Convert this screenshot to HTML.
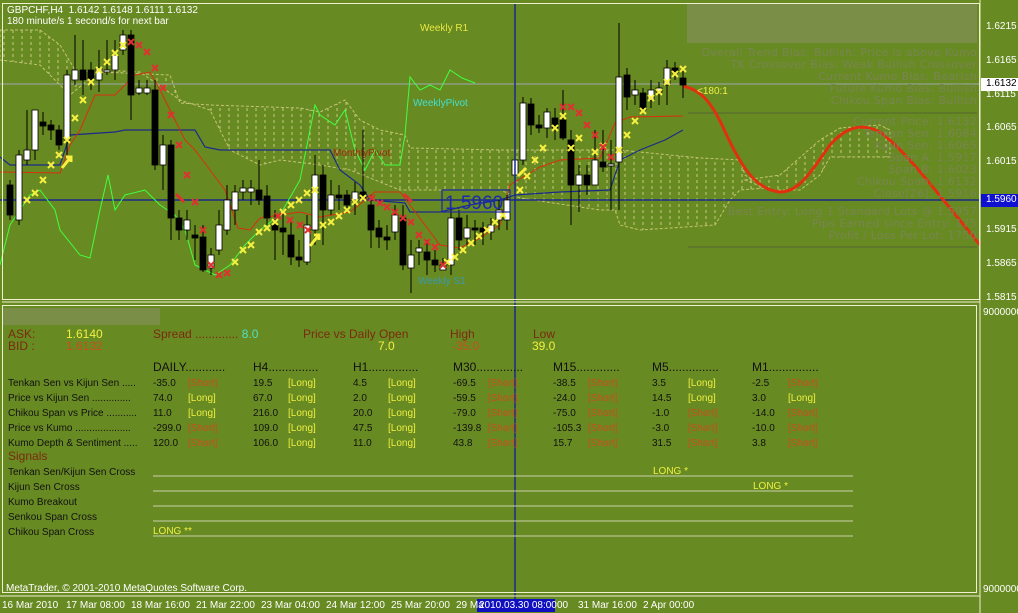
<!DOCTYPE html>
<html><head><meta charset="utf-8">
<style>
html,body{margin:0;padding:0;background:#688a22;}
body{width:1018px;height:613px;overflow:hidden;position:relative;font-family:"Liberation Sans",sans-serif;}
svg{position:absolute;left:0;top:0;}
.t{position:absolute;white-space:pre;font-size:11px;line-height:13px;}
.b{color:#7a2a10;font-size:12px;}
.y{color:#f0f040;}
.r{color:#c8501c;}
.k{color:#111;font-size:10px;}
.h{color:#111;font-size:12px;}
.info{position:absolute;right:41px;font-family:"DejaVu Sans",sans-serif;font-size:11px;color:#788552;white-space:pre;line-height:12px;letter-spacing:0.3px;}
.ax{position:absolute;left:986px;font-size:10px;color:#fff;}
.tm{position:absolute;top:600px;font-size:10px;color:#fff;}
</style></head><body>
<svg width="1018" height="613" viewBox="0 0 1018 613" xmlns="http://www.w3.org/2000/svg">
<defs>
<pattern id="vd" width="9" height="6" patternUnits="userSpaceOnUse">
<line x1="4" y1="0" x2="4" y2="3" stroke="#e6e0a0" stroke-width="1"/>
</pattern>
</defs>
<rect x="687" y="3" width="290" height="40" fill="#7a8e48"/>
<rect x="3" y="308" width="157" height="17" fill="#7a8e48"/>
<polygon fill="url(#vd)" stroke="#e0d890" stroke-dasharray="3,2" stroke-width="1" opacity="0.75" points="0,30 40,30 60,45 75,70 100,72 170,75 180,103 210,105 300,108 320,112 345,100 360,120 380,130 405,135 410,148 500,150 560,150 620,150 700,158 740,160 745,175 765,188 740,190 730,200 715,225 640,230 620,225 615,210 600,210 520,198 500,190 400,190 350,170 320,165 280,160 260,165 230,150 210,110 180,100 140,72 100,70 70,95 40,65 0,60"/>
<polygon fill="url(#vd)" stroke="#e0d890" stroke-dasharray="3,2" stroke-width="1" opacity="0.75" points="745,180 780,175 820,140 840,128 880,125 890,130 890,157 830,157 820,175 800,190 770,190"/>
<line x1="0" y1="84" x2="980" y2="84" stroke="#a0a8b0" stroke-width="1"/>
<line x1="0" y1="200" x2="980" y2="200" stroke="#1a2a8a" stroke-width="1.5"/>
<line x1="688" y1="113" x2="977" y2="113" stroke="#556633" stroke-width="1"/>
<line x1="688" y1="247" x2="977" y2="247" stroke="#556633" stroke-width="1"/>
<polyline fill="none" stroke="#40ff40" stroke-width="1" points="0,265 10,225 30,195 40,190 55,210 60,230 80,255 90,258 100,210 108,175 115,210 125,195 145,190 160,205 175,215 185,230 195,265 215,275 230,265 245,245 260,230 280,215 300,180 315,105 320,115 335,125 345,110 355,150 365,170 375,150 385,165 400,165 405,135 410,77 420,90 430,85 440,90 450,70 462,78 475,83"/>
<polyline fill="none" stroke="#1a2a8a" stroke-width="1.2" points="0,157 10,165 60,165 70,135 115,132 125,130 195,130 205,147 220,150 330,150 340,170 360,185 370,200 405,203 410,212 440,212 470,205 500,200 515,195 560,192 610,190 620,160 640,150 665,140 683,130"/>
<polyline fill="none" stroke="#d83010" stroke-width="1" points="0,172 60,173 70,145 80,130 95,95 115,95 135,75 150,72 160,90 175,120 185,140 195,150 210,170 225,190 238,228 250,230 260,218 300,212 320,217 350,212 375,192 400,192 410,205 440,245 460,248 480,238 500,225 510,185 540,167 560,160 600,158 615,123 630,117 683,116"/>
<path fill="none" stroke="#e03010" stroke-width="3" d="M683,86 C700,90 710,100 722,125 C740,165 755,190 780,192 C800,192 812,170 830,145 C845,128 860,122 880,132 C905,150 935,190 980,245"/>
<g id="candles"></g>
<g id="marks"></g>
<line x1="515" y1="3" x2="515" y2="600" stroke="#1a2a8a" stroke-width="1.5"/>
<rect x="442" y="190" width="68" height="22" fill="none" stroke="#1a2aa0" stroke-width="1.2"/>
<text x="445" y="209" font-family="Liberation Sans,sans-serif" font-size="19" fill="#1a2ab0">1.5960</text>
<rect x="2.5" y="3.5" width="977" height="296" fill="none" stroke="#f0f0d0" stroke-width="1"/>
<line x1="2" y1="302" x2="980" y2="302" stroke="#f0f0d0"/>
<rect x="2.5" y="305.5" width="974" height="287" fill="none" stroke="#f0f0d0" stroke-width="1"/>
<line x1="980" y1="0" x2="980" y2="613" stroke="#f0f0d0"/>
<g stroke="#c8d0a8" stroke-width="1">
<line x1="153" y1="476" x2="853" y2="476"/><line x1="153" y1="491" x2="853" y2="491"/><line x1="153" y1="506" x2="853" y2="506"/><line x1="153" y1="521" x2="853" y2="521"/><line x1="153" y1="536" x2="853" y2="536"/>
</g>
<rect x="981" y="78" width="37" height="13" fill="#fff"/>
<rect x="981" y="194" width="37" height="13" fill="#1010d0"/>
<rect x="477" y="599" width="78" height="13" fill="#1010c0"/>
<line x1="0" y1="596" x2="980" y2="596" stroke="#f0f0d0"/>
</svg>
<script>
var c=[[10,185,215,180,220,0],[19,155,220,150,225,1],[27,150,160,110,165,1],[35,110,150,110,160,1],[43,122,126,112,135,0],[51,125,130,120,140,0],[59,130,145,125,150,0],[67,75,140,70,155,1],[75,70,80,35,85,1],[83,70,80,40,95,0],[91,70,80,62,90,0],[99,68,80,50,92,1],[107,70,72,40,75,1],[115,55,70,40,80,1],[123,35,50,30,55,1],[131,35,95,30,120,0],[139,88,93,80,95,1],[147,88,93,80,95,1],[155,90,165,80,170,0],[163,145,165,135,190,1],[171,145,218,140,240,0],[179,218,230,210,240,0],[187,220,230,210,240,1],[195,235,238,225,260,0],[203,237,270,225,272,0],[211,255,268,248,275,1],[219,225,250,210,255,1],[227,200,230,185,235,1],[235,192,210,185,225,1],[243,188,192,180,200,1],[251,188,192,180,205,1],[259,190,200,160,205,0],[267,196,218,185,225,0],[275,225,230,210,260,0],[283,228,232,210,255,0],[291,235,257,222,265,0],[299,257,260,240,267,0],[307,225,262,215,265,1],[315,175,230,155,245,1],[323,175,210,165,245,0],[331,195,210,180,215,1],[339,195,198,185,210,0],[347,195,205,190,210,0],[355,192,200,182,215,1],[363,192,198,130,200,0],[371,205,230,195,248,0],[379,228,237,220,248,0],[387,237,240,225,250,0],[395,215,232,205,240,1],[403,218,265,205,270,0],[411,255,268,240,293,1],[419,248,252,240,265,1],[427,252,260,240,275,0],[435,260,265,250,272,0],[443,265,270,258,270,1],[451,218,265,210,275,1],[459,218,240,210,250,0],[467,228,238,215,245,1],[475,228,230,220,245,0],[483,228,232,222,245,0],[491,225,232,218,240,1],[499,210,220,200,230,1],[507,200,220,195,230,1],[515,160,175,145,230,1],[523,103,160,97,165,1],[531,104,125,98,135,0],[539,125,128,115,133,0],[547,112,128,108,138,1],[555,118,128,108,140,0],[563,120,138,90,140,0],[571,140,185,130,225,0],[579,175,185,165,212,1],[587,175,185,165,195,0],[595,160,185,130,185,1],[603,162,167,130,172,0],[611,164,166,140,210,1],[619,77,162,23,210,1],[627,75,97,68,110,0],[635,90,95,80,105,1],[643,93,110,88,112,0],[651,90,100,80,108,1],[659,88,92,82,105,1],[667,68,85,60,105,1],[675,68,73,62,80,0],[683,78,85,70,98,0]];
var s='';c.forEach(function(a){s+='<line x1="'+a[0]+'" y1="'+a[3]+'" x2="'+a[0]+'" y2="'+a[4]+'" stroke="#000"/>';s+='<rect x="'+(a[0]-3)+'" y="'+a[1]+'" width="6" height="'+Math.max(2,a[2]-a[1])+'" fill="'+(a[5]?'#fff':'#000')+'" stroke="#000" stroke-width="0.8"/>';});
document.getElementById('candles').innerHTML=s;
var y=[[27,200],[35,193],[43,180],[51,165],[59,155],[67,140],[75,118],[83,100],[91,82],[99,70],[107,62],[115,53],[123,45],[235,262],[243,250],[251,245],[259,232],[267,228],[275,222],[283,212],[291,205],[299,200],[307,193],[315,190],[323,225],[331,222],[339,216],[347,210],[355,202],[363,198],[447,262],[455,257],[463,250],[471,243],[479,236],[487,230],[495,222],[503,215],[520,190],[527,176],[535,160],[543,148],[555,128],[563,116],[571,148],[579,138],[595,152],[603,146],[619,150],[627,135],[635,121],[643,111],[651,98],[659,92],[667,82],[675,74],[683,69]];
var r=[[131,42],[139,45],[147,52],[155,68],[163,88],[171,115],[179,145],[187,175],[195,202],[203,230],[211,265],[219,275],[227,273],[278,216],[290,220],[300,225],[308,230],[372,198],[380,203],[387,207],[395,212],[403,218],[411,222],[419,235],[427,242],[435,247],[443,265],[563,107],[571,107],[579,113],[587,125],[595,135],[603,147],[611,157]];
var m='';function X(a,col){m+='<path d="M'+(a[0]-3)+','+(a[1]-3)+'L'+(a[0]+3)+','+(a[1]+3)+'M'+(a[0]+3)+','+(a[1]-3)+'L'+(a[0]-3)+','+(a[1]+3)+'" stroke="'+col+'" stroke-width="2"/>';}
y.forEach(function(a){X(a,'#f8f040')});r.forEach(function(a){X(a,'#e03030')});
m+='<path d="M62,168 L70,158 M66,157 L71,157 L71,162" stroke="#f8f040" stroke-width="3" fill="none"/>';
m+='<path d="M310,246 L318,236 M314,235 L319,235 L319,240" stroke="#f8f040" stroke-width="3" fill="none"/>';
m+='<path d="M518,176 L526,168" stroke="#f8f040" stroke-width="3"/>';
m+='<path d="M176,194 L184,202 M404,194 L412,202" stroke="#e03030" stroke-width="3"/>';
document.getElementById('marks').innerHTML=m;
</script>
<div class="t" style="left:7px;top:4px;color:#fff;font-size:10px;">GBPCHF,H4  1.6142 1.6148 1.6111 1.6132</div>
<div class="t" style="left:7px;top:15px;color:#fff;font-size:10px;">180 minute/s 1 second/s for next bar</div>
<div class="t" style="left:420px;top:22px;color:#e8e840;font-size:10px;">Weekly R1</div>
<div class="t" style="left:413px;top:97px;color:#40e0d0;font-size:10px;">WeeklyPivot</div>
<div class="t" style="left:333px;top:147px;color:#a02a10;font-size:10px;">MonthlyPivot</div>
<div class="t" style="left:418px;top:275px;color:#3a9ab0;font-size:10px;">Weekly S1</div>
<div class="t" style="left:697px;top:85px;color:#f0f040;font-size:10px;">&lt;180:1</div>
<div class="info" style="top:47px;">Overall Trend Bias: Bullish: Price is above Kumo</div>
<div class="info" style="top:59px;">TK Crossover Bias: Weak Bullish Crossover</div>
<div class="info" style="top:71px;">Current Kumo Bias: Bearish</div>
<div class="info" style="top:83px;">Future Kumo Bias: Bullish</div>
<div class="info" style="top:95px;">Chikou Span Bias: Bullish</div>
<div class="info" style="top:116px;">Current Price: 1.6132</div>
<div class="info" style="top:128px;">Tenkan Sen: 1.6084</div>
<div class="info" style="top:140px;">Kijun Sen: 1.6065</div>
<div class="info" style="top:152px;">Span A: 1.5917</div>
<div class="info" style="top:164px;">Span B: 1.6023</div>
<div class="info" style="top:176px;">Chikou Span: 1.6132</div>
<div class="info" style="top:188px;">Close[26]: 1.5916</div>
<div class="info" style="top:206px;">Best Entry: Long 1 Standard Lots @ 1.5957</div>
<div class="info" style="top:218px;">Pips Earned since Entry: 175</div>
<div class="info" style="top:230px;">Profit / Loss Per Lot: 1750</div>
<div class="ax" style="top:21px;">1.6215</div>
<div class="ax" style="top:55px;">1.6165</div>
<div class="ax" style="top:78px;color:#000;">1.6132</div>
<div class="ax" style="top:89px;">1.6115</div>
<div class="ax" style="top:122px;">1.6065</div>
<div class="ax" style="top:156px;">1.6015</div>
<div class="ax" style="top:194px;">1.5960</div>
<div class="ax" style="top:224px;">1.5915</div>
<div class="ax" style="top:258px;">1.5865</div>
<div class="ax" style="top:292px;">1.5815</div>
<div class="ax" style="top:307px;left:983px;">9000000</div>
<div class="ax" style="top:584px;left:983px;">9000000</div>
<div class="t b" style="left:8px;top:328px;">ASK:</div>
<div class="t b" style="left:8px;top:340px;">BID :</div>
<div class="t y" style="left:66px;top:328px;font-size:12px;">1.6140</div>
<div class="t r" style="left:66px;top:340px;font-size:12px;">1.6132</div>
<div class="t b" style="left:153px;top:328px;">Spread ............. <span style="color:#50e0c0">8.0</span></div>
<div class="t b" style="left:303px;top:328px;">Price vs Daily Open</div>
<div class="t y" style="left:378px;top:340px;font-size:12px;">7.0</div>
<div class="t b" style="left:450px;top:328px;">High</div>
<div class="t r" style="left:452px;top:340px;font-size:12px;">-35.0</div>
<div class="t b" style="left:533px;top:328px;">Low</div>
<div class="t y" style="left:532px;top:340px;font-size:12px;">39.0</div>
<div class="t h" style="left:153px;top:361px;">DAILY............</div>
<div class="t h" style="left:253px;top:361px;">H4...............</div>
<div class="t h" style="left:353px;top:361px;">H1...............</div>
<div class="t h" style="left:453px;top:361px;">M30..............</div>
<div class="t h" style="left:553px;top:361px;">M15.............</div>
<div class="t h" style="left:652px;top:361px;">M5...............</div>
<div class="t h" style="left:752px;top:361px;">M1...............</div>
<div class="t k" style="left:8px;top:376px;line-height:15px;">Tenkan Sen vs Kijun Sen .....
Price vs Kijun Sen ..............
Chikou Span vs Price ...........
Price vs Kumo ....................
Kumo Depth &amp; Sentiment .....</div>
<div class="t k" style="left:153px;top:376px;line-height:15px;">-35.0
74.0
11.0
-299.0
120.0</div>
<div class="t k" style="left:188px;top:376px;line-height:15px;"><span class="r">[Short]</span>
<span class="y">[Long]</span>
<span class="y">[Long]</span>
<span class="r">[Short]</span>
<span class="r">[Short]</span></div>
<div class="t k" style="left:253px;top:376px;line-height:15px;">19.5
67.0
216.0
109.0
106.0</div>
<div class="t k y" style="left:288px;top:376px;line-height:15px;color:#f0f040">[Long]
[Long]
[Long]
[Long]
[Long]</div>
<div class="t k" style="left:353px;top:376px;line-height:15px;">4.5
2.0
20.0
47.5
11.0</div>
<div class="t k" style="left:388px;top:376px;line-height:15px;color:#f0f040">[Long]
[Long]
[Long]
[Long]
[Long]</div>
<div class="t k" style="left:453px;top:376px;line-height:15px;">-69.5
-59.5
-79.0
-139.8
43.8</div>
<div class="t k" style="left:488px;top:376px;line-height:15px;color:#c8501c">[Short]
[Short]
[Short]
[Short]
[Short]</div>
<div class="t k" style="left:553px;top:376px;line-height:15px;">-38.5
-24.0
-75.0
-105.3
15.7</div>
<div class="t k" style="left:588px;top:376px;line-height:15px;color:#c8501c">[Short]
[Short]
[Short]
[Short]
[Short]</div>
<div class="t k" style="left:652px;top:376px;line-height:15px;">3.5
14.5
-1.0
-3.0
31.5</div>
<div class="t k" style="left:688px;top:376px;line-height:15px;"><span class="y">[Long]</span>
<span class="y">[Long]</span>
<span class="r">[Short]</span>
<span class="r">[Short]</span>
<span class="r">[Short]</span></div>
<div class="t k" style="left:752px;top:376px;line-height:15px;">-2.5
3.0
-14.0
-10.0
3.8</div>
<div class="t k" style="left:788px;top:376px;line-height:15px;"><span class="r">[Short]</span>
<span class="y">[Long]</span>
<span class="r">[Short]</span>
<span class="r">[Short]</span>
<span class="r">[Short]</span></div>
<div class="t b" style="left:8px;top:450px;">Signals</div>
<div class="t k" style="left:8px;top:465px;line-height:15px;">Tenkan Sen/Kijun Sen Cross
Kijun Sen Cross
Kumo Breakout
Senkou Span Cross
Chikou Span Cross</div>
<div class="t y" style="left:653px;top:465px;font-size:10px;">LONG *</div>
<div class="t y" style="left:753px;top:480px;font-size:10px;">LONG *</div>
<div class="t y" style="left:153px;top:525px;font-size:10px;">LONG **</div>
<div class="t" style="left:6px;top:582px;color:#fff;font-size:10px;">MetaTrader, © 2001-2010 MetaQuotes Software Corp.</div>
<div class="tm" style="left:2px;">16 Mar 2010</div>
<div class="tm" style="left:66px;">17 Mar 08:00</div>
<div class="tm" style="left:131px;">18 Mar 16:00</div>
<div class="tm" style="left:196px;">21 Mar 22:00</div>
<div class="tm" style="left:261px;">23 Mar 04:00</div>
<div class="tm" style="left:326px;">24 Mar 12:00</div>
<div class="tm" style="left:391px;">25 Mar 20:00</div>
<div class="tm" style="left:456px;">29 Ma</div>
<div class="tm" style="left:479px;">2010.03.30 08:00</div>
<div class="tm" style="left:557px;">00</div>
<div class="tm" style="left:578px;">31 Mar 16:00</div>
<div class="tm" style="left:643px;">2 Apr 00:00</div>
</body></html>
